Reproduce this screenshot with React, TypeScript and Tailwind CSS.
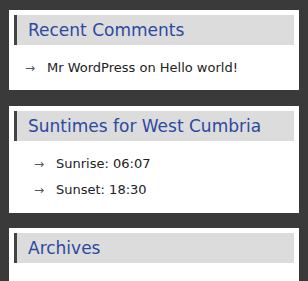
export default function App() {
  const font = { fontFamily: '"DejaVu Sans", Verdana, sans-serif' };
  const Header = ({ title }: { title: string }) => (
    <div className="mx-[5px] h-[30px] bg-[#dcdcdc] border-l-[3px] border-[#444444] pl-[11px] flex items-center">
      <span className="text-[17px] leading-none text-[#2b4a9f]">{title}</span>
    </div>
  );
  const Item = ({ text, indent }: { text: string; indent: number }) => (
    <li className="flex items-center h-[26px] text-[13px] text-[#222222]" style={{ paddingLeft: indent }}>
      <span className="w-[22px] text-[#555555] text-[12px]">→</span>
      <span>{text}</span>
    </li>
  );
  return (
    <div className="w-[308px] h-[281px] bg-[#3a3a3a] overflow-hidden pt-[10px] pl-[9px]" style={font}>
      <div className="w-[290px] bg-white pt-[5px] pb-[9px]">
        <Header title="Recent Comments" />
        <ul className="pt-[10px]">
          <Item text="Mr WordPress on Hello world!" indent={16} />
        </ul>
      </div>
      <div className="w-[290px] bg-white mt-[16px] pt-[5px] pb-[10px]">
        <Header title="Suntimes for West Cumbria" />
        <ul className="pt-[10px]">
          <Item text="Sunrise: 06:07" indent={25} />
          <Item text="Sunset: 18:30" indent={25} />
        </ul>
      </div>
      <div className="w-[290px] bg-white mt-[15px] pt-[5px] h-[60px]">
        <Header title="Archives" />
      </div>
    </div>
  );
}
